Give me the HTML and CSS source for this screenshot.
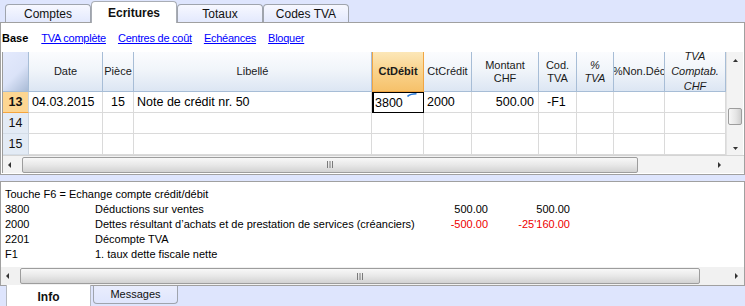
FILE: index.html
```html
<!DOCTYPE html>
<html>
<head>
<meta charset="utf-8">
<link rel="stylesheet" href="styles.css">
</head>
<body>
<div class="tabs">
  <div class="tab">Comptes</div>
  <div class="tab active">Ecritures</div>
  <div class="tab">Totaux</div>
  <div class="tab">Codes TVA</div>
</div>
<div class="panel">
  <div class="subnav">
    <span class="cur">Base</span>
    <a class="lnk">TVA complète</a>
    <a class="lnk">Centres de coût</a>
    <a class="lnk">Echéances</a>
    <a class="lnk">Bloquer</a>
  </div>
  <div class="grid">
    <div class="gridtop">
      <div class="cells">
        <div class="hc corner"></div>
        <div class="hc">Date</div>
        <div class="hc">Pièce</div>
        <div class="hc">Libellé</div>
        <div class="hc sel">CtDébit</div>
        <div class="hc">CtCrédit</div>
        <div class="hc two">Montant<br>CHF</div>
        <div class="hc two">Cod.<br>TVA</div>
        <div class="hc two it">%<br>TVA</div>
        <div class="hc clip">%Non.Déc</div>
        <div class="hc three it">TVA<br>Comptab.<br>CHF</div>

        <div class="rh cur">13</div>
        <div class="c">04.03.2015</div>
        <div class="c ctr">15</div>
        <div class="c">Note de crédit nr. 50</div>
        <div class="c edit">3800<svg class="mark" width="10" height="4" viewBox="0 0 10 4"><path d="M0.5 3.5 C3 1.2 6 0.8 9.5 0.8" stroke="#2a7ad8" stroke-width="1.6" fill="none"/></svg></div>
        <div class="c">2000</div>
        <div class="c rt">500.00</div>
        <div class="c code">-F1</div>
        <div class="c"></div>
        <div class="c"></div>
        <div class="c"></div>

        <div class="rh">14</div>
        <div class="c"></div><div class="c"></div><div class="c"></div><div class="c"></div><div class="c"></div><div class="c"></div><div class="c"></div><div class="c"></div><div class="c"></div><div class="c"></div>

        <div class="rh">15</div>
        <div class="c"></div><div class="c"></div><div class="c"></div><div class="c"></div><div class="c"></div><div class="c"></div><div class="c"></div><div class="c"></div><div class="c"></div><div class="c"></div>
      </div>
      <div class="vscroll">
        <svg class="arr" width="15" height="14" viewBox="0 0 15 14"><path d="M5 9 L10 9 L7.5 6 Z" fill="#333"/></svg>
        <div class="vtrack"><div class="vthumb"></div></div>
        <svg class="arr" width="15" height="14" viewBox="0 0 15 14"><path d="M5 6 L10 6 L7.5 9 Z" fill="#333"/></svg>
      </div>
    </div>
    <div class="hscroll">
      <svg class="harr" width="15" height="16" viewBox="0 0 15 16"><path d="M8 5 L8 11 L5 8 Z" fill="#333"/></svg>
      <div class="htrack"><div class="hthumb t1"><svg width="8" height="7" viewBox="0 0 8 7"><path d="M1.5 0 V7 M4 0 V7 M6.5 0 V7" stroke="#7a7a7a" stroke-width="1"/></svg></div></div>
      <svg class="harr" width="15" height="16" viewBox="0 0 15 16"><path d="M6 5 L6 11 L9 8 Z" fill="#333"/></svg>
      <div class="hcorner"></div>
    </div>
  </div>
</div>
<div class="info">
  <div class="lines">
    <div class="full">Touche F6 = Echange compte crédit/débit</div>
    <div>3800</div><div>Déductions sur ventes</div><div class="amt">500.00</div><div class="amt">500.00</div>
    <div>2000</div><div>Dettes résultant d’achats et de prestation de services (créanciers)</div><div class="amt neg">-500.00</div><div class="amt neg">-25'160.00</div>
    <div>2201</div><div>Décompte TVA</div><div></div><div></div>
    <div>F1</div><div>1. taux dette fiscale nette</div><div></div><div></div>
  </div>
  <div class="hscroll ibar">
    <svg class="harr" width="15" height="16" viewBox="0 0 15 16"><path d="M8 5 L8 11 L5 8 Z" fill="#333"/></svg>
    <div class="htrack"><div class="hthumb t2"><svg width="8" height="7" viewBox="0 0 8 7"><path d="M1.5 0 V7 M4 0 V7 M6.5 0 V7" stroke="#7a7a7a" stroke-width="1"/></svg></div></div>
    <svg class="harr" width="15" height="16" viewBox="0 0 15 16"><path d="M6 5 L6 11 L9 8 Z" fill="#333"/></svg>
  </div>
</div>
<div class="btabs">
  <div class="btab active">Info</div>
  <div class="btab">Messages</div>
</div>
</body>
</html>
```
FILE: styles.css
```css
* { box-sizing: border-box; }
html, body { margin: 0; padding: 0; }
body {
  width: 745px;
  height: 306px;
  overflow: hidden;
  background: #dee5fd;
  font-family: "Liberation Sans", Arial, sans-serif;
  font-size: 11px;
  color: #000;
}

/* top tabs */
.tabs {
  display: flex;
  align-items: flex-end;
  height: 22px;
  padding-left: 5px;
  position: relative;
  z-index: 2;
}
.tab {
  width: 86px;
  height: 18px;
  border: 1px solid #9fa4ad;
  border-bottom: none;
  border-radius: 4px 4px 0 0;
  background: linear-gradient(#f7f8ff, #e3e9fd);
  text-align: center;
  font-size: 12px;
  line-height: 18px;
  color: #111;
}
.tab.active {
  height: 22px;
  margin-bottom: -1px;
  background: #fff;
  font-weight: bold;
  line-height: 22px;
  border-color: #a9adb5;
}

/* main panel */
.panel {
  height: 153px;
  background: #fff;
  border: 1px solid #a0a0a0;
  display: flex;
  flex-direction: column;
}
.subnav {
  height: 29px;
  display: flex;
  align-items: center;
  gap: 12px;
  padding-left: 1px;
  padding-top: 1px;
  font-size: 11px;
}
.subnav .cur { font-weight: bold; margin-right: 1px; }
.subnav .lnk { color: #0000ff; text-decoration: underline; letter-spacing: -0.25px; }

.grid {
  margin-left: 1px;
  border-left: 1px solid #9c9c9c;
  width: 742px;
  display: flex;
  flex-direction: column;
}
.gridtop { display: flex; }
.cells {
  width: 723px;
  display: grid;
  grid-template-columns: 26px 74px 31px 238px 52px 48px 67px 38px 37px 51px 61px;
  grid-template-rows: 40px 21px 21px 21px;
}
.hc {
  background: linear-gradient(#fbfcfe, #f1f5fa 45%, #dce6f3);
  border-right: 1px solid #a7bdd6;
  border-bottom: 1px solid #a7bdd6;
  display: flex;
  align-items: center;
  justify-content: center;
  text-align: center;
  font-size: 11px;
  color: #1a1a1a;
  line-height: 13px;
  overflow: hidden;
  white-space: nowrap;
}
.hc.corner {
  background: linear-gradient(135deg, #e4eafd 0%, #dbe3f8 55%, #a9bbd6 100%);
}
.hc.sel {
  background: linear-gradient(#fce7b8, #f9d38c 50%, #f6c16a);
  border-right-color: #f0a543;
  border-bottom-color: #f0a543;
  border-left: 1px solid #f0a543;
  font-weight: bold;
}
.hc.it { font-style: italic; }
.hc.three { line-height: 15px; }

.rh {
  background: #e3ebf5;
  border-right: 1px solid #c9d3de;
  border-bottom: 1px solid #d4dde7;
  display: flex;
  align-items: center;
  justify-content: center;
  font-size: 12.5px;
  color: #111;
}
.rh.cur {
  background: #fdd692;
  border-bottom: 1px solid #f5a53d;
  font-weight: bold;
}
.c {
  border-right: 1px solid #dadada;
  border-bottom: 1px solid #dadada;
  display: flex;
  align-items: center;
  padding-left: 3px;
  font-size: 12.5px;
  white-space: nowrap;
  overflow: hidden;
  position: relative;
}
.c.ctr { justify-content: center; padding-left: 0; }
.c.rt { justify-content: flex-end; padding-right: 4px; }
.c.code { padding-left: 8px; }
.c.edit {
  border: 1px solid #000;
  border-left-width: 2px;
  padding-left: 1px;
}
.mark { position: absolute; right: 6px; top: 0; }

.vscroll {
  width: 17px;
  background: #f3f3f3;
  border-left: 1px solid #e2e2e2;
  display: flex;
  flex-direction: column;
  align-items: center;
}
.arr { flex: none; margin-top: 1px; }
.vtrack {
  flex: 1;
  width: 100%;
  position: relative;
}
.vthumb {
  position: absolute;
  left: 1px;
  right: 1px;
  top: 41px;
  height: 17px;
  border: 1px solid #9d9d9d;
  border-radius: 2px;
  background: linear-gradient(90deg, #f7f7f7, #e4e4e4 60%, #cfcfcf);
}

.hscroll {
  height: 18px;
  display: flex;
  align-items: center;
  background: #f3f3f3;
  border-top: 1px solid #d4d4d4;
}
.harr { flex: none; }
.htrack {
  flex: 1;
  height: 16px;
  position: relative;
}
.hthumb {
  position: absolute;
  top: 0;
  height: 16px;
  border: 1px solid #9d9d9d;
  border-radius: 2px;
  background: linear-gradient(#f8f8f8, #e8e8e8 50%, #d2d2d2);
  display: flex;
  align-items: center;
  justify-content: center;
}
.hthumb.t1 { left: 4px; width: 616px; }
.hthumb.t2 { left: 4px; width: 680px; }
.hcorner { width: 17px; height: 16px; flex: none; }

/* info panel */
.info {
  margin-top: 6px;
  height: 105px;
  background: #fff;
  border: 1px solid #a0a0a0;
  display: flex;
  flex-direction: column;
  position: relative;
  z-index: 1;
}
.lines {
  padding: 5px 0 0 4px;
  display: grid;
  grid-template-columns: 90px 325px 68px 82px;
  grid-auto-rows: 15px;
  line-height: 15px;
  font-size: 11px;
  white-space: nowrap;
}
.lines .full { grid-column: 1 / -1; }
.lines .amt { text-align: right; }
.lines .neg { color: #ee0000; }
.ibar { margin-top: auto; border-top: none; background: #f1f1f1; }

/* bottom tabs */
.btabs {
  display: flex;
  padding-left: 6px;
  gap: 2px;
  margin-top: -1px;
  position: relative;
  z-index: 2;
}
.btab {
  width: 85px;
  height: 18px;
  border: 1px solid #9fa4ad;
  border-top: none;
  border-radius: 0 0 4px 4px;
  background: linear-gradient(#e9edfd, #dfe6fd);
  text-align: center;
  font-size: 11px;
  line-height: 17px;
  color: #111;
  margin-top: 1px;
}
.btab.active {
  height: 22px;
  margin-top: 0;
  background: #fff;
  font-weight: bold;
  font-size: 12px;
  line-height: 24px;
  border-color: #b5b9c0;
  border-radius: 0;
}
```
